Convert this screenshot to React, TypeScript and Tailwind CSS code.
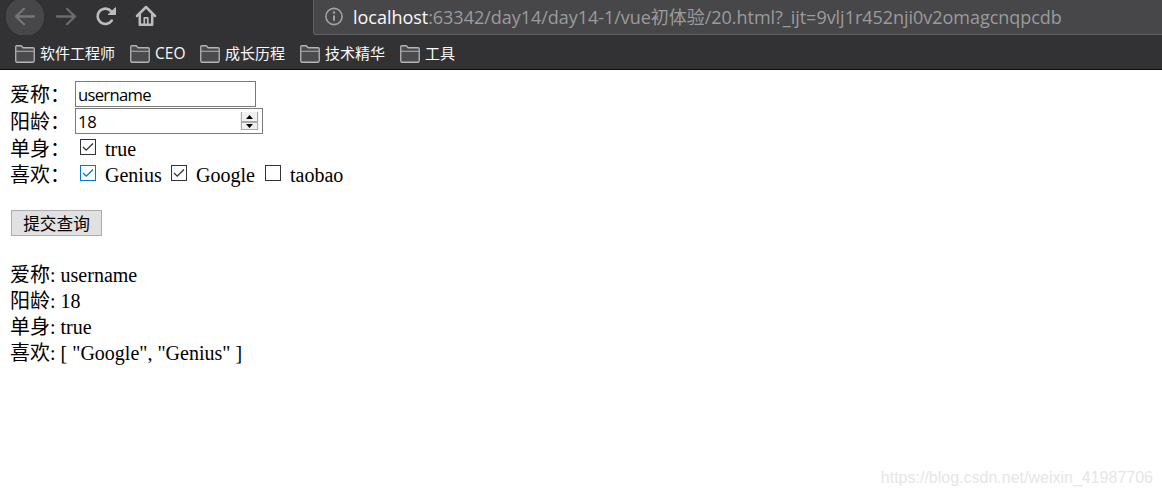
import { useState } from 'react';

type CheckProps = {
  label: string;
  checked: boolean;
  focused?: boolean;
  className?: string;
  onToggle: () => void;
};

const bookmarks = [
  { name: '软件工程师', width: 'w-[76px]' },
  { name: 'CEO', width: 'w-[31px] text-[15.5px]' },
  { name: '成长历程', width: 'w-[61px]' },
  { name: '技术精华', width: 'w-[61px]' },
  { name: '工具', width: 'w-[61px]' },
];

function FolderIcon() {
  return (
    <svg width="20" height="18" viewBox="0 0 20 18" fill="none" className="shrink-0">
      <path
        d="M.75 15.5V2Q.75.75 2 .75h4.2l2 2H18q1.25 0 1.25 1.25v11.5q0 1.75-1.25 1.75H2Q.75 17.25.75 15.5Z"
        fill="#4b4b4d"
        stroke="#b5b5b6"
        strokeWidth="1.3"
      />
      <path d="M1 6.3h18" stroke="#a8a8a9" strokeWidth="1.1" />
    </svg>
  );
}

function Toolbar() {
  return (
    <div className="flex h-[35px]">
      <div className="w-[313px] shrink-0 overflow-hidden">
        <svg width="170" height="40" viewBox="0 0 170 40" fill="none" strokeLinecap="round" strokeLinejoin="round">
          <circle cx="25" cy="16.7" r="19.9" fill="#474749" stroke="#2a2a2c" strokeWidth=".8" />
          <path d="M34 16.5H16M24 8.7l-8 7.8 8 7.8" stroke="#757577" strokeWidth="2.3" />
          <path d="M57 16.5h18M67 8.7l8 7.8-8 7.8" stroke="#6b6b6d" strokeWidth="2.3" />
          <path d="M111.8 20.5a7.7 7.7 0 1 1-.4-9" stroke="#bcbcbd" strokeWidth="2.6" />
          <path d="M115.5 8v6.5h-7Z" fill="#bcbcbd" stroke="#bcbcbd" strokeWidth="1" />
          <path d="M137 16l9-9 9 9" stroke="#bcbcbd" strokeWidth="2.5" />
          <path d="M139.8 15v9.7h12.4V15" stroke="#bcbcbd" strokeWidth="2.5" />
          <path d="M144.3 24v-6.2h3.5V24" stroke="#bcbcbd" strokeWidth="1.7" />
        </svg>
      </div>
      <div className="flex flex-1 items-center overflow-hidden whitespace-nowrap rounded-bl-[3px] border-b border-l border-[#606062] bg-[#474749] pb-px pl-[10px]">
        <svg width="20" height="20" viewBox="0 0 20 20" fill="none" className="shrink-0">
          <circle cx="10" cy="9.5" r="8.1" stroke="#a2a2a4" strokeWidth="1.6" />
          <path d="M10 8.5v5.3" stroke="#a2a2a4" strokeWidth="2" />
          <circle cx="10" cy="5.5" r="1.2" fill="#a2a2a4" />
        </svg>
        <p className="ml-[9px] font-['Open_Sans','Noto_Sans_CJK_SC',sans-serif] text-[18px] leading-[32px] tracking-[-0.03px] text-[#9b9b9d]">
          <span className="text-[#f9f9fa]">localhost</span>
          <span>:63342/day14/day14-1/vue初体验/20.html?_ijt=9vlj1r452nji0v2omagcnqpcdb</span>
        </p>
      </div>
    </div>
  );
}

function Checkbox({ label, checked, focused, className, onToggle }: CheckProps) {
  return (
    <label className={`flex items-start ${className ?? ''}`}>
      <input type="checkbox" className="sr-only" checked={checked} onChange={onToggle} />
      <svg
        width="16"
        height="16"
        viewBox="0 0 16 16"
        fill="none"
        className={`mr-[9px] mt-[3px] shrink-0 ${focused ? 'text-[#0078d7]' : 'text-[#333]'}`}
      >
        <rect x=".5" y=".5" width="15" height="15" fill="white" stroke="currentColor" />
        {checked && <path d="m3 8 3.2 3.2L13 4.5" stroke="currentColor" strokeWidth="1.3" />}
      </svg>
      {label}
    </label>
  );
}

export default function App() {
  const [name, setName] = useState('username');
  const [age, setAge] = useState(18);
  const [single, setSingle] = useState(true);
  const [likes, setLikes] = useState(['Google', 'Genius']);

  const toggleLike = (item: string) => {
    setLikes(likes.includes(item) ? likes.filter((i) => i !== item) : [...likes, item]);
  };

  return (
    <div className="relative h-[496px] overflow-hidden bg-white text-black">
      <header className="h-[70px] border-b border-[#0c0c0d] bg-[#323234]">
        <Toolbar />
        <nav className="flex h-[34px] items-center gap-[14px] pl-[15px] pt-[3px] font-['Open_Sans','Noto_Sans_CJK_SC',sans-serif] text-[15px] leading-5 text-[#f9f9fa]">
          {bookmarks.map((b) => (
            <div key={b.name} className="flex items-center gap-[5px] whitespace-nowrap">
              <FolderIcon />
              <span className={`pb-[2px] ${b.width}`}>{b.name}</span>
            </div>
          ))}
        </nav>
      </header>

      <main className="pl-[10px] pt-[11px] font-['Liberation_Serif','Noto_Sans_CJK_SC',serif] text-[20px] leading-[26px]">
        <form onSubmit={(e) => e.preventDefault()}>
          <div className="flex h-[27px]">
            <label htmlFor="name" className="w-[65px] whitespace-nowrap pt-px">爱称：</label>
            <input
              id="name"
              value={name}
              onChange={(e) => setName(e.target.value)}
              className="h-[26px] w-[181px] border border-[#7a7a7a] px-[2px] pt-[2px] font-['Open_Sans',sans-serif] text-[16.67px] tracking-[-0.72px]"
            />
          </div>
          <div className="flex h-[27px]">
            <label htmlFor="age" className="w-[65px] whitespace-nowrap pt-px">阳龄：</label>
            <div className="flex h-[26px] w-[188px] border border-[#7a7a7a]">
              <input
                id="age"
                value={age}
                onChange={(e) => setAge(Number(e.target.value))}
                className="w-[164px] px-[2px] pt-[2px] font-['Open_Sans',sans-serif] text-[16.67px] tracking-[-0.2px]"
              />
              <div className="mt-[3px] flex h-[18px] w-[19px] flex-col bg-[#f0f0f0] px-px">
                <button type="button" onClick={() => setAge(age + 1)} className="flex h-[10px] shrink-0 items-center justify-center border-x border-b border-[#acacac] pt-px">
                  <svg width="7" height="4" viewBox="0 0 7 4"><path d="M0 4 3.5 0 7 4Z" /></svg>
                </button>
                <button type="button" onClick={() => setAge(age - 1)} className="flex h-[8px] shrink-0 items-center justify-center border border-[#acacac]">
                  <svg width="7" height="4" viewBox="0 0 7 4"><path d="M0 0h7L3.5 4Z" /></svg>
                </button>
              </div>
            </div>
          </div>
          <div className="flex h-[26px] pt-px">
            <span className="w-[70px] whitespace-nowrap">单身：</span>
            <Checkbox label={String(single)} checked={single} onToggle={() => setSingle(!single)} />
          </div>
          <div className="flex h-[26px] pt-px">
            <span className="w-[70px] whitespace-nowrap">喜欢：</span>
            <Checkbox label="Genius" focused checked={likes.includes('Genius')} onToggle={() => toggleLike('Genius')} className="w-[91px]" />
            <Checkbox label="Google" checked={likes.includes('Google')} onToggle={() => toggleLike('Google')} className="w-[94px]" />
            <Checkbox label="taobao" checked={likes.includes('taobao')} onToggle={() => toggleLike('taobao')} />
          </div>
          <button
            type="submit"
            className="ml-px mt-[23px] block h-[26px] w-[91px] whitespace-nowrap border border-[#adadad] bg-[#e1e1e1] font-['Noto_Sans_CJK_SC',sans-serif] text-[16.67px] leading-6"
          >
            提交查询
          </button>
        </form>

        <div className="mt-[26px]">
          <p>爱称: {name}</p>
          <p>阳龄: {age}</p>
          <p>单身: {String(single)}</p>
          <p>喜欢: [ {likes.map((l) => `"${l}"`).join(', ')} ]</p>
        </div>
      </main>

      <span className="absolute bottom-[9px] right-[9px] font-['Liberation_Sans',sans-serif] text-[16px] leading-[18px] text-[#e6e6e6]">
        https://blog.csdn.net/weixin_41987706
      </span>
    </div>
  );
}
